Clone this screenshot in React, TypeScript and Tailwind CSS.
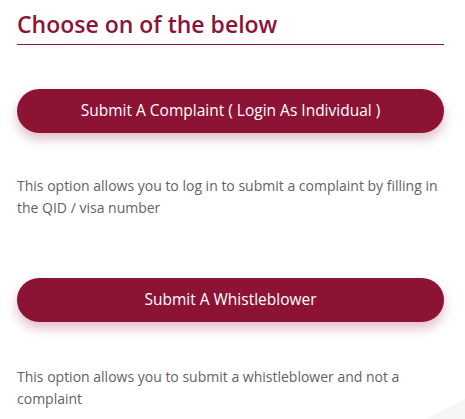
import React from 'react';

const options = [
    {
        label: 'Submit A Complaint ( Login As Individual )',
        text: 'This option allows you to log in to submit a complaint by filling in the QID / visa number',
        top: 'mt-[44px]',
        gap: 'mt-[42px]',
    },
    {
        label: 'Submit A Whistleblower',
        text: 'This option allows you to submit a whistleblower and not a complaint',
        top: 'mt-[59px]',
        gap: 'mt-[44px]',
    },
];

const App = () => {
    return (
        <div className="relative w-[465px] h-[419px] overflow-hidden bg-white" style={{ fontFamily: '"Open Sans", "Noto Sans", sans-serif' }}>
            <div className="pl-[17px] pr-[21px] pt-[9px]">
                <h2 className="text-[23px] leading-[30px] font-semibold text-[#8c1537] pb-[5px] border-b border-[#8c1537]">
                    Choose on of the below
                </h2>
                {options.map((opt, i) => (
                    <div key={i} className={opt.top}>
                        <button className="w-full h-[44px] rounded-full bg-[#8d1335] text-white text-[15.5px] shadow-[0_6px_12px_rgba(141,19,53,0.28)]">
                            {opt.label}
                        </button>
                        <p className={`${opt.gap} text-[14px] leading-[22px] text-[#5f6368]`}>
                            {opt.text}
                        </p>
                    </div>
                ))}
            </div>
            <svg className="absolute right-0 bottom-0" width="40" height="20" viewBox="0 0 40 20">
                <polygon points="0,20 40,0 40,20" fill="#f6f6f7" />
            </svg>
        </div>
    );
};

export default App;
